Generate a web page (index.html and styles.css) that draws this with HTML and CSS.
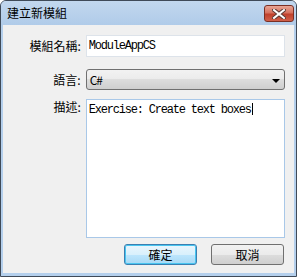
FILE: index.html
```html
<!DOCTYPE html>
<html lang="zh-Hant">
  <head>
    <meta charset="UTF-8" />
    <title>建立新模組</title>
    <link rel="stylesheet" href="styles.css">
  </head>
  <body>
    <div class="window">
      <div class="titlebar">
        <span class="title">建立新模組</span>
        <button class="close-button" aria-label="關閉">
          <svg width="14" height="10" viewBox="0 0 14 10">
            <path d="M2 1 L12 9 M12 1 L2 9" stroke="#5a3a34" stroke-width="4" stroke-linecap="square" />
            <path d="M2 1 L12 9 M12 1 L2 9" stroke="#ffffff" stroke-width="2" stroke-linecap="square" />
          </svg>
        </button>
      </div>

      <div class="client">
        <div class="row">
          <label class="label">模組名稱:</label>
          <div class="field text-field">ModuleAppCS</div>
        </div>

        <div class="row row-combo">
          <label class="label">語言:</label>
          <div class="field combo">
            <span class="combo-value">C#</span>
            <span class="combo-arrow"></span>
          </div>
        </div>

        <div class="row row-top row-desc">
          <label class="label">描述:</label>
          <div class="field text-area">Exercise: Create text boxes<span class="caret"></span></div>
        </div>

        <div class="buttons">
          <button class="button default-button">確定</button>
          <button class="button">取消</button>
        </div>
      </div>
    </div>
  </body>
</html>
```

FILE: styles.css
```css
* {
  margin: 0;
  padding: 0;
  box-sizing: border-box;
  font-family: "Noto Sans CJK TC", "Noto Sans", sans-serif;
}

body {
  background-color: #ffffff;
  width: 299px;
  height: 277px;
}

.window {
  width: 297px;
  height: 277px;
  border: 1px solid #3f4a58;
  border-radius: 6px 6px 0 0;
  background-color: #b4cfec;
  display: flex;
  flex-direction: column;
}

.titlebar {
  height: 24px;
  display: flex;
  align-items: center;
  justify-content: space-between;
  padding: 0 2px 0 6px;
  background: linear-gradient(#c2d7ee, #b0cbe9);
  border-radius: 5px 5px 0 0;
}

.title {
  font-size: 12px;
  line-height: 12px;
  color: #000000;
}

.close-button {
  width: 30px;
  height: 17px;
  margin-top: 1px;
  border: 1px solid #7a2f24;
  border-radius: 3px;
  background: linear-gradient(#e8a595, #d6725f 45%, #c0402b 55%, #d0604a);
  display: flex;
  align-items: center;
  justify-content: center;
}

.client {
  flex: 1;
  margin: 0 2px 3px 2px;
  background-color: #f0f0f0;
  padding: 10px 9px 0 0;
  display: flex;
  flex-direction: column;
}

.row {
  display: flex;
  align-items: center;
}

.row-top {
  align-items: flex-start;
}

.row-combo {
  margin-top: 12px;
}

.row-desc {
  margin-top: 9px;
}

.label {
  width: 78px;
  margin-right: 5px;
  text-align: right;
  font-size: 12px;
  line-height: 14px;
  color: #000000;
}

.row-top .label {
  padding-top: 1px;
}

.field {
  width: 200px;
  font-family: "Liberation Mono", monospace;
  font-size: 12px;
  letter-spacing: -1.2px;
  color: #000000;
}

.text-field {
  height: 22px;
  line-height: 20px;
  padding-left: 2px;
  background-color: #ffffff;
  border: 1px solid #dde3ea;
}

.combo {
  height: 21px;
  border: 1px solid #707070;
  border-radius: 3px;
  background: linear-gradient(#f2f2f2, #ebebeb 50%, #dddddd 50%, #cfcfcf);
  display: flex;
  align-items: center;
  justify-content: space-between;
  padding: 0 4px 0 3px;
}

.combo-arrow {
  width: 0;
  height: 0;
  border-left: 4px solid transparent;
  border-right: 4px solid transparent;
  border-top: 4px solid #000000;
  margin-top: 2px;
}

.text-area {
  height: 139px;
  padding: 2px 2px;
  line-height: 16px;
  background-color: #ffffff;
  border: 1px solid #a9c8e8;
}

.caret {
  display: inline-block;
  width: 1px;
  height: 12px;
  background-color: #000000;
  vertical-align: -2px;
  margin-left: 1px;
}

.buttons {
  margin-top: 6px;
  display: flex;
  justify-content: flex-end;
  gap: 14px;
  padding-right: 1px;
}

.button {
  width: 73px;
  height: 21px;
  border: 1px solid #707070;
  border-radius: 3px;
  background: linear-gradient(#f2f2f2, #ebebeb 50%, #dddddd 50%, #cfcfcf);
  font-size: 12px;
  line-height: 12px;
  color: #000000;
}

.default-button {
  border-color: #3c7fb1;
  box-shadow: inset 0 0 0 1px #48c5f0;
  background: linear-gradient(#eaf6fd, #d9f0fc 50%, #bee6fd 50%, #a7d9f5);
}
```
